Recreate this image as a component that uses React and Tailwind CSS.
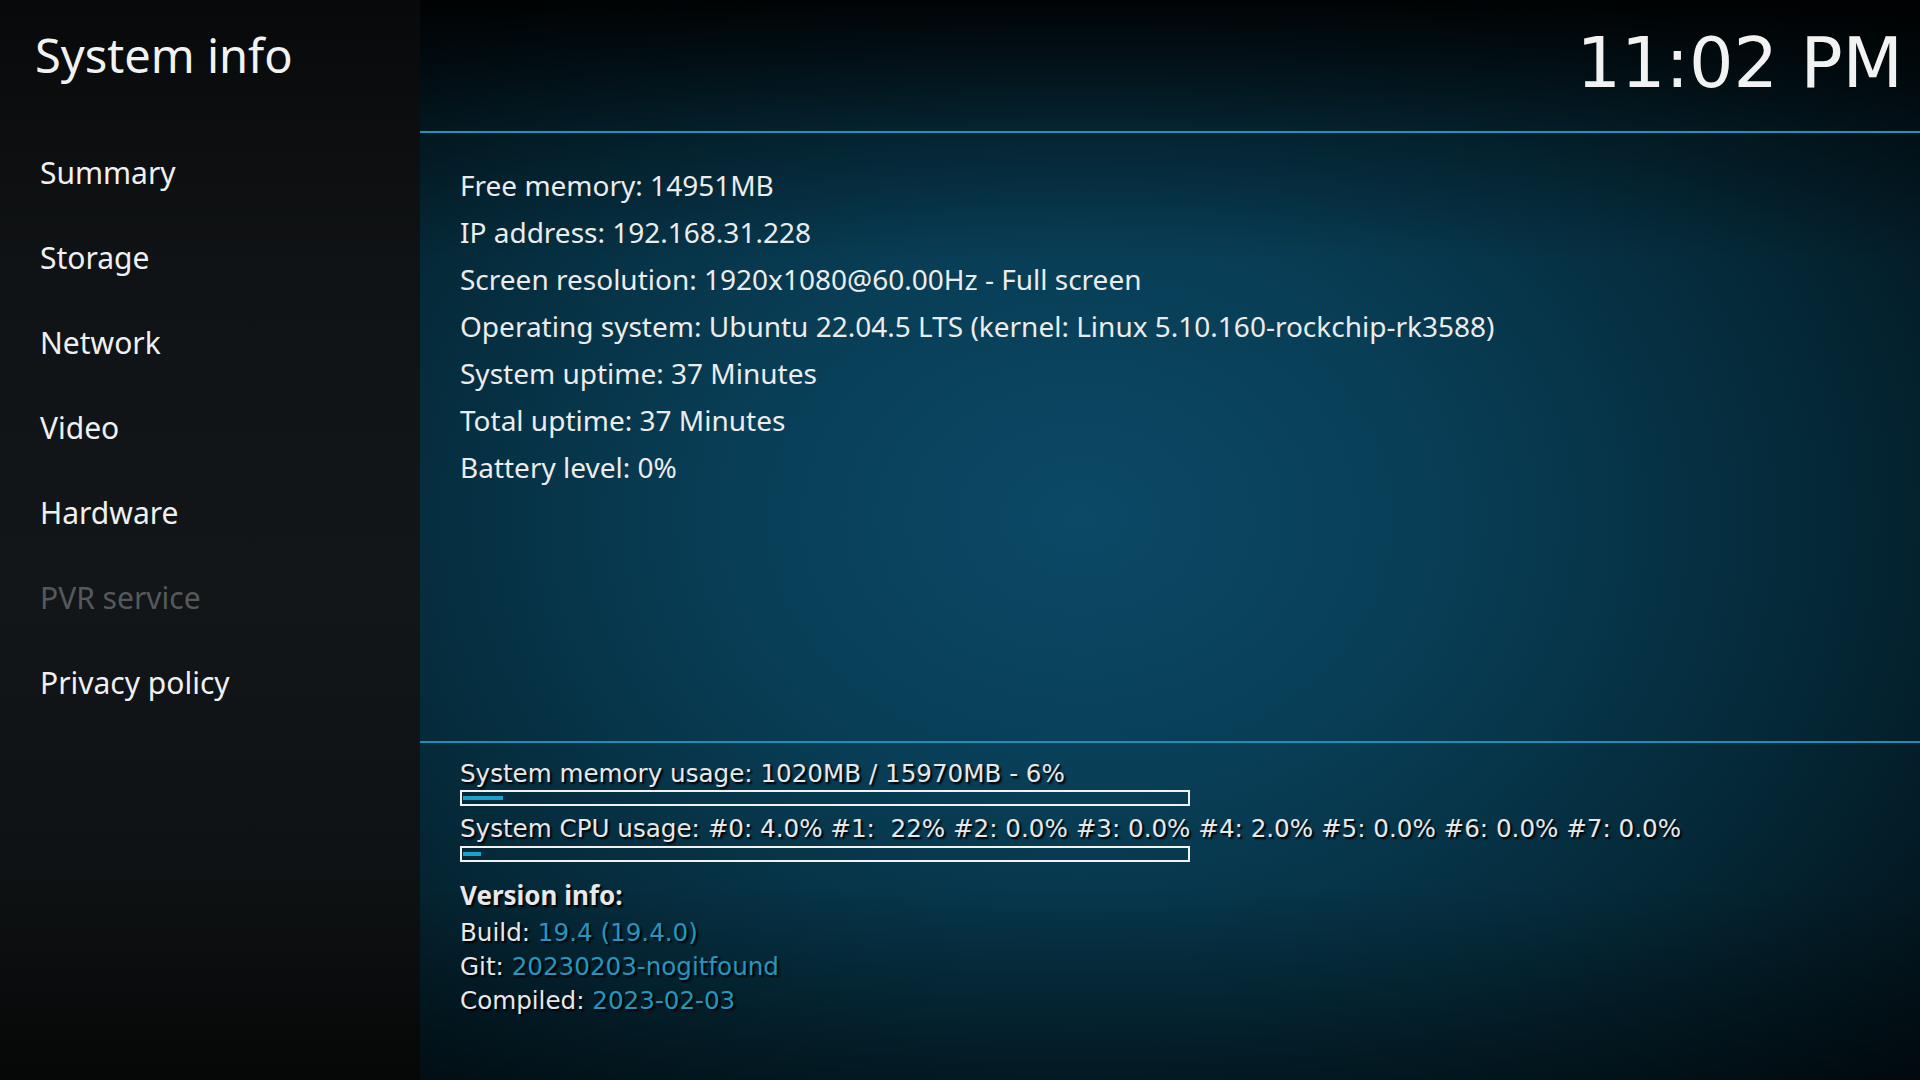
import React from "react";

const menu = [
  { label: "Summary" },
  { label: "Storage" },
  { label: "Network" },
  { label: "Video" },
  { label: "Hardware" },
  { label: "PVR service", disabled: true },
  { label: "Privacy policy" },
];

const info = [
  "Free memory: 14951MB",
  "IP address: 192.168.31.228",
  "Screen resolution: 1920x1080@60.00Hz - Full screen",
  "Operating system: Ubuntu 22.04.5 LTS (kernel: Linux 5.10.160-rockchip-rk3588)",
  "System uptime: 37 Minutes",
  "Total uptime: 37 Minutes",
  "Battery level: 0%",
];

const versions = [
  { label: "Build:", value: "19.4 (19.4.0)" },
  { label: "Git:", value: "20230203-nogitfound" },
  { label: "Compiled:", value: "2023-02-03" },
];

function UsageBar({ percent }) {
  return (
    <div className="w-[730px] h-[16px] border-2 border-[#f2f2f2] flex items-center px-[1px]">
      <div className="h-[4px] bg-[#1ba2cc]" style={{ width: `${percent}%` }} />
    </div>
  );
}

export default function App() {
  return (
    <div className="w-[1920px] h-[1080px] flex overflow-hidden bg-black">
      {/* Sidebar */}
      <aside className="w-[420px] h-full flex flex-col bg-[linear-gradient(to_bottom,#08090a_0%,#101315_25%,#121618_55%,#0f1214_80%,#060707_100%)] font-['Noto_Sans',sans-serif]">
        <h1 className="pt-[25px] pl-[35px] text-[47px] leading-[60px] text-[#f2f2f2] font-normal">
          System info
        </h1>
        <nav className="mt-[45px] flex flex-col">
          {menu.map((m) => (
            <div
              key={m.label}
              className={
                "h-[85px] leading-[85px] pl-[40px] text-[30px] " +
                (m.disabled ? "text-[#55595c]" : "text-[#f0f0f0]")
              }
            >
              {m.label}
            </div>
          ))}
        </nav>
      </aside>

      {/* Main */}
      <main className="flex-1 h-full flex flex-col bg-[linear-gradient(to_bottom,rgba(0,0,0,0.92)_0%,rgba(0,0,0,0.35)_12%,rgba(0,0,0,0)_24%,rgba(0,0,0,0)_82%,rgba(0,0,0,0.4)_100%),radial-gradient(ellipse_72%_78%_at_44%_48%,#0b4966_0%,#083d55_35%,#052b3b_65%,#021118_100%)]">
        <header className="h-[131px] flex justify-end pt-[18px] pr-[17px]">
          <div className="font-['DejaVu_Sans',sans-serif] text-[70px] leading-[90px] text-[#f2f2f2]">
            11:02 PM
          </div>
        </header>
        <div className="h-[2px] bg-[#1a95bd]" />

        <section className="h-[608px] pt-[29px] pl-[40px] font-['Noto_Sans',sans-serif] text-[28px] leading-[47px] text-[#ececec]">
          {info.map((line) => (
            <div key={line}>{line}</div>
          ))}
        </section>

        <div className="h-[2px] bg-[#1a8fb8]" />

        <section className="pl-[40px] pt-[16px] font-['DejaVu_Sans',sans-serif] text-[24.6px] text-[#e8e8e8] [text-shadow:2px_2px_2px_#000]">
          <div className="leading-[30px]">System memory usage: 1020MB / 15970MB - 6%</div>
          <div className="mt-[1px]">
            <UsageBar percent={5.5} />
          </div>
          <div className="mt-[8px] leading-[30px]">
            System CPU usage: #0: 4.0% #1:&nbsp; 22% #2: 0.0% #3: 0.0% #4: 2.0% #5: 0.0% #6: 0.0% #7: 0.0%
          </div>
          <div className="mt-[2px]">
            <UsageBar percent={2.5} />
          </div>

          <div className="mt-[16px] font-['Noto_Sans',sans-serif] font-bold text-[26px] leading-[34px]">
            Version info:
          </div>
          <div className="mt-[4px] leading-[34px]">
            {versions.map((v) => (
              <div key={v.label}>
                {v.label} <span className="text-[#2596bf]">{v.value}</span>
              </div>
            ))}
          </div>
        </section>
      </main>
    </div>
  );
}
